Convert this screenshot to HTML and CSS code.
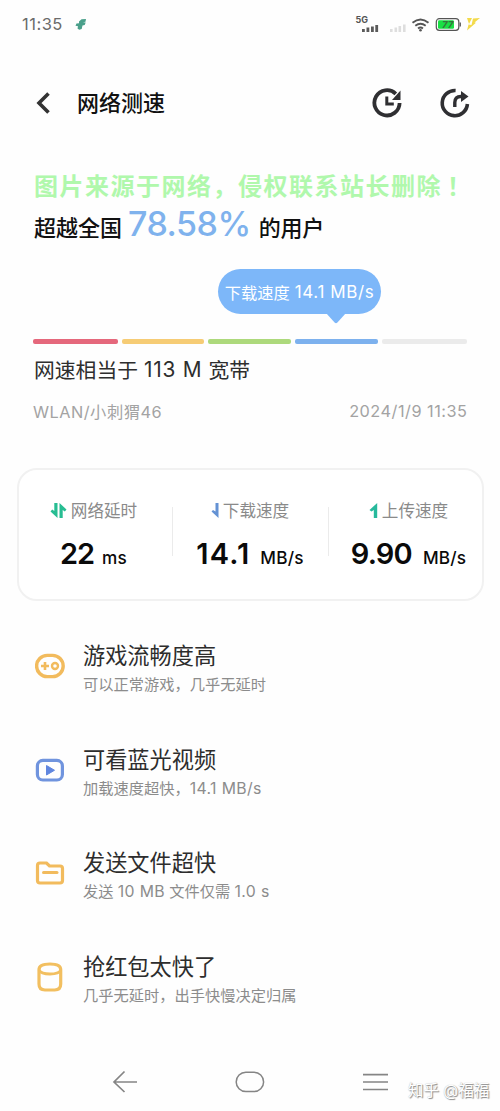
FILE: index.html
```html
<!DOCTYPE html>
<html lang="zh-CN">
<head>
<meta charset="utf-8">
<title>网络测速</title>
<link rel="stylesheet" href="styles.css">
</head>
<body>
<div class="screen">
  <div class="status">
    <span class="clock">11:35</span>
    <svg class="app-mark" width="12" height="13" viewBox="0 0 12 13"><path d="M4 3.500L6.500 1.200 11 1l-.5 2.700-2.500.6 2.700.2-1 2.500-2.200.5-.8 3.500-2.500.7-1.700-1.200.5-2.200L.5 7.800l1-2.200 2.500-.3z" fill="#4aa08b"/></svg>
    <svg class="status-icons" width="126" height="22" viewBox="0 0 126 22">
      <g fill="#5a5a5a"><rect x="7" y="16" width="2.800" height="3"/><rect x="11.500" y="14.500" width="2.800" height="4.500"/><rect x="16" y="13.500" width="2.800" height="5.500"/><rect x="20.300" y="12" width="2.800" height="7"/></g>
      <g fill="#dedede"><rect x="35" y="16" width="2.600" height="3"/><rect x="39.500" y="14.500" width="2.600" height="4.500"/><rect x="43.500" y="13" width="2.600" height="6"/><rect x="48" y="11.500" width="2.600" height="7.500"/></g>
      <g fill="none" stroke="#555" stroke-width="1.800"><path d="M57.500 9.800Q65.500 3.200 73.500 9.800M60.300 12.800Q65.500 8.600 70.700 12.800M63 15.500Q65.500 13.500 68 15.500"/></g><circle cx="65.500" cy="17.300" r="1.300" fill="#555"/>
      <rect x="81.300" y="5.700" width="22.500" height="11.600" rx="3" fill="#fff" stroke="#555" stroke-width="1.200"/><rect x="104.500" y="9.500" width="1.500" height="4" fill="#666"/>
      <rect x="83" y="7.300" width="16" height="8.400" rx="1.300" fill="#18e044"/>
      <path d="M112 5h5l-3 6zM118 5.500l7-.5-5.500 4.500 1.500.3-9 7.700 1.500-6 3 .5z" fill="#f3da4a"/>
      <text x="0.500" y="10" class="net">5G</text><text x="87" y="15" class="battery">77</text>
    </svg>
  </div>

  <header class="header">
    <svg width="16" height="24" viewBox="0 0 16 24"><path d="M13.500 2.500L4 12l9.500 9.500" fill="none" stroke="#333" stroke-width="3.600"/></svg>
    <h1 class="title">网络测速</h1>
    <svg class="history" width="32" height="32" viewBox="0 0 32 32"><path d="M24.800 6.800A12.600 12.600 0 1 0 28.600 16" fill="none" stroke="#2f2f32" stroke-width="3.800"/><path d="M29.500 3.500v9.500h-8.500z" fill="#2f2f32"/><path d="M15.800 9.500v7.500h7" fill="none" stroke="#2f2f32" stroke-width="3"/></svg>
    <svg class="share" width="32" height="32" viewBox="0 0 32 32"><path d="M16.600 3.500A12.600 12.600 0 1 0 28.400 17" fill="none" stroke="#2f2f32" stroke-width="3.600"/><path d="M15.800 20v-4.500q0-6 6-6h2" fill="none" stroke="#2f2f32" stroke-width="3.400"/><path d="M22 4l7.500 5.500-7.500 5.500z" fill="#2f2f32"/></svg>
  </header>

  <div class="notice">图片来源于网络，侵权联系站长删除<span class="bang">！</span></div>
  <div class="rank"><span>超越全国</span><strong class="percent">78.58%</strong><span>的用户</span></div>

  <div class="bubble-row"><div class="bubble"><span>下载速度</span><span class="bubble-value">14.1 MB/s</span>
    <svg class="pointer" width="20" height="11" viewBox="0 0 20 11"><path d="M0 0h20l-8.600 9.600q-1.400 1.400-2.800 0z" fill="#7db7f9"/></svg></div></div>
  <div class="scale"><i class="seg red"></i><i class="seg yellow"></i><i class="seg green"></i><i class="seg blue"></i><i class="seg gray"></i></div>
  <div class="equiv"><span>网速相当于</span><span class="equiv-value">113 M</span><span>宽带</span></div>
  <div class="meta"><span class="wlan">WLAN/小刺猬46</span><span class="date">2024/1/9 11:35</span></div>

  <section class="card">
    <div class="stat latency">
      <div class="label"><svg width="17" height="17" viewBox="0 0 17 17"><path d="M7.500 1v15L.5 9.500 2.200 7.500 4.300 9V1zM9.500 16V1l7 6.500-1.700 2L12.700 8v8z" fill="#27bd92"/></svg><span>网络延时</span></div>
      <div class="value"><b>22</b><span class="unit">ms</span></div>
    </div>
    <div class="stat download">
      <div class="label"><svg width="8" height="17" viewBox="0 0 8 17"><path d="M7.500 1v15L.5 9.500 2 8l2.500 1.500V1z" fill="#6492d4"/></svg><span>下载速度</span></div>
      <div class="value"><b>14.1</b><span class="unit">MB/s</span></div>
    </div>
    <div class="stat upload">
      <div class="label"><svg width="9" height="17" viewBox="0 0 9 17"><path d="M8.200 1v15H4.800V8L2.500 9.500.5 8z" fill="#27b99c"/></svg><span>上传速度</span></div>
      <div class="value"><b>9.90</b><span class="unit">MB/s</span></div>
    </div>
  </section>

  <ul class="list">
    <li class="item">
      <svg class="icon" width="30" height="32" viewBox="0 0 30 32"><rect x="1.600" y="5.400" width="26.600" height="21.200" rx="10.600" fill="none" stroke="#f2bb5d" stroke-width="3.400"/><path d="M6 16h8M10 12v8" stroke="#f2bb5d" stroke-width="2.600"/><circle cx="20" cy="16" r="3" fill="none" stroke="#f2bb5d" stroke-width="2.400"/></svg>
      <div class="copy"><div class="name">游戏流畅度高</div><div class="detail">可以正常游戏，几乎无延时</div></div>
    </li>
    <li class="item">
      <svg class="icon" width="30" height="32" viewBox="0 0 30 32"><rect x="2.400" y="6.400" width="25" height="19.600" rx="5.500" fill="none" stroke="#7094de" stroke-width="3.200"/><path d="M11.500 11.500v9.500l8-4.750z" fill="#6086df" stroke="#6086df" stroke-linejoin="round"/></svg>
      <div class="copy"><div class="name">可看蓝光视频</div><div class="detail">加载速度超快，<span class="latin-detail">14.1 MB/s</span></div></div>
    </li>
    <li class="item">
      <svg class="icon" width="30" height="32" viewBox="0 0 30 32"><path d="M5 6h6.500l3 3H25q2.500 0 2.500 2.500v12q0 2.500-2.500 2.500H5q-2.500 0-2.500-2.500v-15Q2.500 6 5 6z" fill="none" stroke="#f2bb5d" stroke-width="3.200"/><path d="M8.500 15.500H22" stroke="#f2bb5d" stroke-width="3" stroke-linecap="round"/></svg>
      <div class="copy"><div class="name">发送文件超快</div><div class="detail">发送 <span class="latin-detail">10 MB</span> 文件仅需 <span class="latin-detail">1.0 s</span></div></div>
    </li>
    <li class="item">
      <svg class="icon" width="30" height="32" viewBox="0 0 30 32"><path d="M4 8.500q0-5.500 11-5.500 10.700 0 10.700 5.500V23q0 6-6 6H10q-6 0-6-6z" fill="none" stroke="#f2bf60" stroke-width="3.200"/><path d="M4 9q2 4 11 4t10.700-4" fill="none" stroke="#f2bf60" stroke-width="2.800"/></svg>
      <div class="copy"><div class="name">抢红包太快了</div><div class="detail">几乎无延时，出手快慢决定归属</div></div>
    </li>
  </ul>

  <nav class="nav">
    <svg width="26" height="24" viewBox="0 0 26 24"><path d="M25 12H2M12.500 1.500L2 12l10.500 10" fill="none" stroke="#858585" stroke-width="1.700"/></svg>
    <svg width="30" height="24" viewBox="0 0 30 24"><rect x="1.200" y="2.200" width="27.400" height="19.400" rx="9.700" fill="none" stroke="#858585" stroke-width="1.500"/></svg>
    <svg width="26" height="24" viewBox="0 0 26 24"><path d="M1 4.700h25M1 12h25M1 19.500h25" stroke="#858585" stroke-width="1.700"/></svg>
    <span class="credit">知乎 @福福</span>
  </nav>
</div>
</body>
</html>
```
FILE: styles.css
```css
* { box-sizing: border-box; }
body { margin: 0; background: #fefefe; font-family: Inter, "Noto Sans CJK SC", sans-serif; color: #111; }
svg { display: block; flex: none; }
.screen { width: 500px; height: 1111px; overflow: hidden; display: flex; flex-direction: column; white-space: nowrap; }

.status { height: 48px; display: flex; align-items: center; padding: 0 19px 0 22px; }
.clock { font-size: 16.5px; letter-spacing: .5px; color: #6b6b6b; }
.app-mark { margin-left: 12px; }
.status-icons { margin-left: auto; }
.net { font: 700 9px Inter, sans-serif; fill: #555; }
.battery { font: italic 700 9.500px Inter, sans-serif; fill: #37733c; }

.header { height: 110px; display: flex; align-items: center; padding: 0 29px 0 35px; }
.title { margin: 0 auto 0 26px; font-size: 22px; font-weight: 500; line-height: 32px; }
.share { margin-left: 36px; }

.notice { height: 51px; padding: 13px 0 0 34px; font-size: 24px; font-weight: 700; line-height: 32px; letter-spacing: 1.5px; color: #b0f8ac; }
.bang { margin-left: 5px; }
.rank { height: 45px; padding-left: 34px; display: flex; align-items: baseline; font-size: 22px; font-weight: 500; line-height: 30px; }
.percent { margin: 0 8px 0 6px; font-size: 34px; font-weight: 500; letter-spacing: -.5px; color: #7fb2ed; }
.percent + span { letter-spacing: -.2px; }

.bubble-row { height: 70px; padding: 15px 0 0 218px; }
.bubble { position: relative; width: 163px; height: 45px; border-radius: 23px; background: #7db7f9; color: #fff; display: flex; align-items: center; justify-content: center; gap: 5px; font-size: 16.3px; }
.bubble-value { font-size: 17px; letter-spacing: .6px; }
.pointer { position: absolute; left: 108px; top: 44px; }
.scale { height: 6px; margin: 15px 33px 0; display: grid; grid-template-columns: 85px 82px 83px 83px 85px; justify-content: space-between; }
.seg { height: 5px; border-radius: 2px; }
.red { background: #e5687c; }
.yellow { background: #f6cc75; }
.green { background: #add97c; }
.blue { background: #7db1ee; }
.gray { background: #ebebeb; }
.equiv { height: 48px; padding: 0 34px; display: flex; align-items: center; gap: 6px; font-size: 20.8px; color: #2e2e2e; }
.equiv-value { letter-spacing: .8px; }
.meta { height: 32px; margin-top: 2px; padding: 0 33px; display: flex; align-items: center; justify-content: space-between; font-size: 16.3px; color: #a3a3a3; }
.wlan { letter-spacing: .5px; }
.date { letter-spacing: .5px; margin-right: -.5px; }

.card { height: 133px; margin: 41px 16px 0 17px; border: 2px solid #f1f1f1; border-radius: 20px; display: grid; grid-template-columns: 153px 156px 154px; background: #fff; }
.stat { position: relative; display: flex; flex-direction: column; align-items: center; padding-top: 28px; }
.stat + .stat::before { content: ""; position: absolute; left: 0; top: 37px; width: 1px; height: 49px; background: #ebebeb; }
.latency { padding-right: 4px; }
.upload { padding-left: 7px; }
.label { height: 24px; display: flex; align-items: center; gap: 4px; font-size: 16.6px; color: #8a8a8a; }
.value { margin-top: 10px; height: 44px; line-height: 44px; display: flex; align-items: baseline; gap: 8px; color: #0a0a0a; }
.value b { font-size: 29px; font-weight: 600; }
.latency b { letter-spacing: -1px; }
.download b { letter-spacing: 1.1px; }
.upload b { letter-spacing: -.8px; }
.download .value { gap: 10px; }
.upload .value { gap: 11px; }
.unit { font-size: 17.2px; font-weight: 500; letter-spacing: .2px; }

.list { list-style: none; margin: 37px 0 0; padding: 0; }
.item { height: 103.500px; display: flex; padding-left: 35px; }
.icon { margin-top: 12px; }
.copy { margin-left: 18px; padding-top: 1px; }
.name { font-size: 22.2px; line-height: 34px; color: #2d2d2d; }
.detail { font-size: 15.25px; line-height: 24px; color: #8c8c8c; }
.latin-detail { font-size: 15.8px; letter-spacing: .35px; }

.nav { position: relative; display: flex; justify-content: space-between; padding: 0 112px; margin-top: 18px; }
.credit { position: absolute; left: 408px; top: 10px; font-size: 15.5px; line-height: 22px; color: #fff; text-shadow: 1px 1px 1px #888, 0 0 1px #aaa; }
```
